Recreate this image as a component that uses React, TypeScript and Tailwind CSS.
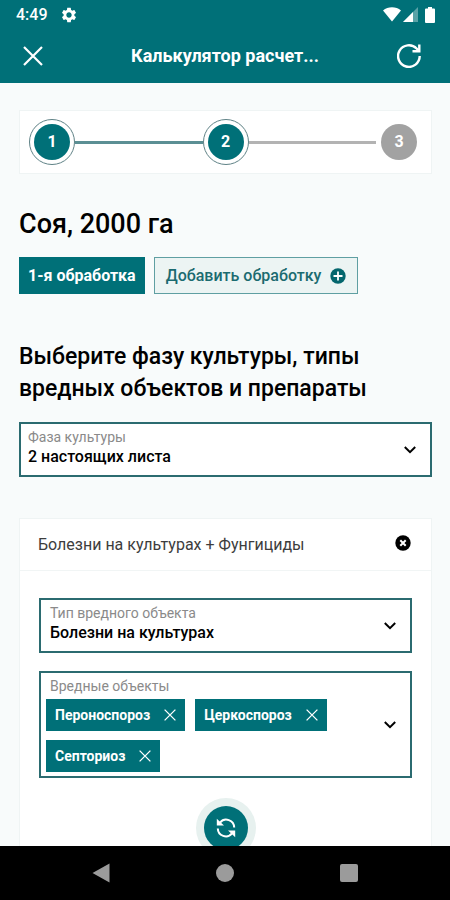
import { useState } from 'react';
import { MdSettings } from 'react-icons/md';

interface Step {
  id: number;
  reached: boolean;
}

const steps: Step[] = [
  { id: 1, reached: true },
  { id: 2, reached: true },
  { id: 3, reached: false },
];

function CloseIcon({ className }: { className: string }) {
  return (
    <svg className={className} viewBox="0 0 20 20" fill="none" stroke="currentColor" strokeWidth={2.2}>
      <path d="M1 1l18 18M19 1L1 19" />
    </svg>
  );
}

function ChevronIcon() {
  return (
    <svg className="w-3 h-2" viewBox="0 0 12 8" fill="none" stroke="currentColor" strokeWidth={2}>
      <path d="M0.8 1L6 6.2 11.2 1" />
    </svg>
  );
}

function StatusBar() {
  return (
    <div className="flex items-center justify-between h-[29px] pl-4 pr-[15px]">
      <div className="flex items-center gap-3">
        <span className="text-base font-medium">4:49</span>
        <MdSettings className="w-[18px] h-[18px]" />
      </div>
      <div className="flex items-center">
        {/* Wi-Fi */}
        <svg className="w-[18px] h-[15px]" viewBox="0 0 18 15" fill="currentColor">
          <path d="M0 3.5C5 -0.8 13 -0.8 18 3.5L9 14.5z" />
        </svg>
        {/* Mobile signal */}
        <svg className="w-[15px] h-[15px] ml-0.5" viewBox="0 0 15 15" fill="currentColor">
          <path d="M15 0v15H0z" opacity="0.35" />
          <path d="M10 5v10H0z" />
        </svg>
        {/* Battery */}
        <svg className="w-[10px] h-4 ml-[7px]" viewBox="0 0 10 16" fill="currentColor">
          <path d="M3 0h4v1.6h2a1 1 0 011 1V15a1 1 0 01-1 1H1a1 1 0 01-1-1V2.6a1 1 0 011-1h2z" />
        </svg>
      </div>
    </div>
  );
}

function Header() {
  return (
    <header className="shrink-0 bg-[#007078] text-white">
      <StatusBar />
      <div className="flex items-center h-[54px] pl-[23px] pr-[29px]">
        <button aria-label="Закрыть">
          <CloseIcon className="w-5 h-5" />
        </button>
        <h1 className="flex-1 pl-[10px] text-lg font-bold text-center">Калькулятор расчет...</h1>
        <button aria-label="Обновить">
          <svg className="w-6 h-6" viewBox="0 0 24 24" fill="none" stroke="currentColor" strokeWidth={2.4}>
            <path d="M22.7 12A10.8 10.8 0 1 1 19.6 4.5L21.5 6.5" />
            <path d="M22.3 0.5v6.8h-6.8" />
          </svg>
        </button>
      </div>
    </header>
  );
}

function Stepper() {
  return (
    <ol className="flex items-center bg-white border border-[#eff4f4] px-[9px] h-16">
      {steps.map((step, index) => (
        <li key={step.id} className={`flex items-center ${index > 0 ? 'flex-1' : ''}`}>
          {index > 0 && (
            <span className={`flex-1 h-[3px] ${step.reached ? 'bg-[#5b8f94]' : 'bg-[#b3b3b3]'}`} />
          )}
          <span
            className={`flex items-center justify-center w-[46px] h-[46px] rounded-full border ${
              step.reached ? 'border-[#5f8286]' : 'border-transparent'
            }`}
          >
            <span
              className={`flex items-center justify-center w-9 h-9 rounded-full text-base font-bold text-white ${
                step.reached ? 'bg-[#007078]' : 'bg-[#a2a2a2]'
              }`}
            >
              {step.id}
            </span>
          </span>
        </li>
      ))}
    </ol>
  );
}

interface SelectFieldProps {
  id: string;
  label: string;
  options: string[];
  className: string;
}

function SelectField({ id, label, options, className }: SelectFieldProps) {
  return (
    <div className={`relative bg-white border-2 border-[#2b6b70] pt-1 h-[55px] ${className}`}>
      <label htmlFor={id} className="block text-sm leading-[18px] text-[#8a8a8a]">
        {label}
      </label>
      <select id={id} className="block w-full appearance-none bg-transparent text-base leading-[22px] font-medium text-black">
        {options.map((option) => (
          <option key={option}>{option}</option>
        ))}
      </select>
      <span className="absolute right-[14px] inset-y-0 flex items-center pointer-events-none">
        <ChevronIcon />
      </span>
    </div>
  );
}

function PestField() {
  const [pests, setPests] = useState(['Пероноспороз', 'Церкоспороз', 'Септориоз']);

  return (
    <div className="flex items-center justify-between bg-white border-2 border-[#2b6b70] pl-[5px] pr-[14px] py-1">
      <div>
        <p className="pl-1 text-sm leading-[18px] text-[#8a8a8a]">Вредные объекты</p>
        <ul className="flex flex-wrap gap-x-[10px] gap-y-[9px] mt-1">
          {pests.map((pest) => (
            <li key={pest} className="flex items-center gap-[14px] h-8 px-[9px] bg-[#007078] text-white text-sm font-bold">
              {pest}
              <button aria-label={`Удалить ${pest}`} onClick={() => setPests(pests.filter((item) => item !== pest))}>
                <CloseIcon className="w-3 h-3" />
              </button>
            </li>
          ))}
        </ul>
      </div>
      <button aria-label="Показать список">
        <ChevronIcon />
      </button>
    </div>
  );
}

function TreatmentCard() {
  return (
    <section className="mt-[41px] bg-white border border-[#eff4f4]">
      <div className="flex items-center justify-between h-[52px] pl-[18px] pr-5 border-b border-[#f1f5f5]">
        <h3 className="text-base text-[#3d3d3d]">Болезни на культурах + Фунгициды</h3>
        <button aria-label="Удалить блок" className="mb-1">
          <svg className="w-4 h-4" viewBox="0 0 16 16">
            <circle cx="8" cy="8" r="7.7" fill="#000" />
            <path d="M5.3 5.3l5.4 5.4M10.7 5.3l-5.4 5.4" stroke="#fff" strokeWidth={2} />
          </svg>
        </button>
      </div>
      <div className="flex flex-col gap-[18px] px-[19px] pt-[27px] pb-8">
        <SelectField id="pest-type" label="Тип вредного объекта" options={['Болезни на культурах']} className="px-[9px]" />
        <PestField />
        <button
          aria-label="Обновить список"
          className="self-center flex items-center justify-center mt-0.5 w-[60px] h-[60px] rounded-full bg-[#e7f1ef]"
        >
          <span className="flex items-center justify-center w-11 h-11 rounded-full bg-[#007078] text-white">
            <svg className="w-5 h-5" viewBox="0 0 20 20" fill="none" stroke="currentColor" strokeWidth={2}>
              <path d="M4 4.6A8 8 0 0 1 18.2 9.5" />
              <path d="M1.8 10.5A8 8 0 0 0 16 15.4" />
              <path d="M0.8 0.8L8 7.6H0.8z" fill="currentColor" stroke="none" />
              <path d="M19.2 19.2L12 12.4h7.2z" fill="currentColor" stroke="none" />
            </svg>
          </span>
        </button>
      </div>
    </section>
  );
}

function NavigationBar() {
  return (
    <nav className="shrink-0 grid grid-cols-3 items-center justify-items-center h-[54px] px-[39px] bg-black text-[#9b9b9b]">
      <button aria-label="Назад">
        <svg className="w-[18px] h-5" viewBox="0 0 18 20" fill="currentColor">
          <path d="M17.5 0.5v19L0.5 10z" />
        </svg>
      </button>
      <button aria-label="Домой" className="w-[18px] h-[18px] rounded-full bg-[#9b9b9b]" />
      <button aria-label="Недавние" className="w-[18px] h-[18px] rounded-xs bg-[#9b9b9b]" />
    </nav>
  );
}

export default function App() {
  return (
    <div className="flex flex-col h-screen overflow-hidden bg-[#f8fbfb] font-['Roboto','Noto_Sans',sans-serif] text-black">
      <Header />
      <main className="flex-1 min-h-0 overflow-hidden pl-[19px] pr-[18px] pt-[27px]">
        <Stepper />
        <h2 className="mt-[34px] text-[27px] leading-8 font-medium">Соя, 2000 га</h2>
        <div className="flex gap-[9px] mt-[17px]">
          <button className="h-[37px] px-[9px] bg-[#007078] text-base font-bold text-white">1-я обработка</button>
          <button className="flex items-center gap-[9px] h-[37px] px-[11px] border border-[#5f9fa2] bg-[#ecf4f3] text-base font-medium text-[#1b6b70]">
            Добавить обработку
            <svg className="w-4 h-4" viewBox="0 0 16 16">
              <circle cx="8" cy="8" r="7.7" fill="#04666d" />
              <path d="M8 3.5v9M3.5 8h9" stroke="#fff" strokeWidth={1.8} />
            </svg>
          </button>
        </div>
        <h2 className="mt-[47px] mb-[17px] text-[23px] leading-8 font-medium">
          Выберите фазу культуры, типы вредных объектов и препараты
        </h2>
        <SelectField id="phase" label="Фаза культуры" options={['2 настоящих листа']} className="px-[7px]" />
        <TreatmentCard />
      </main>
      <NavigationBar />
    </div>
  );
}
